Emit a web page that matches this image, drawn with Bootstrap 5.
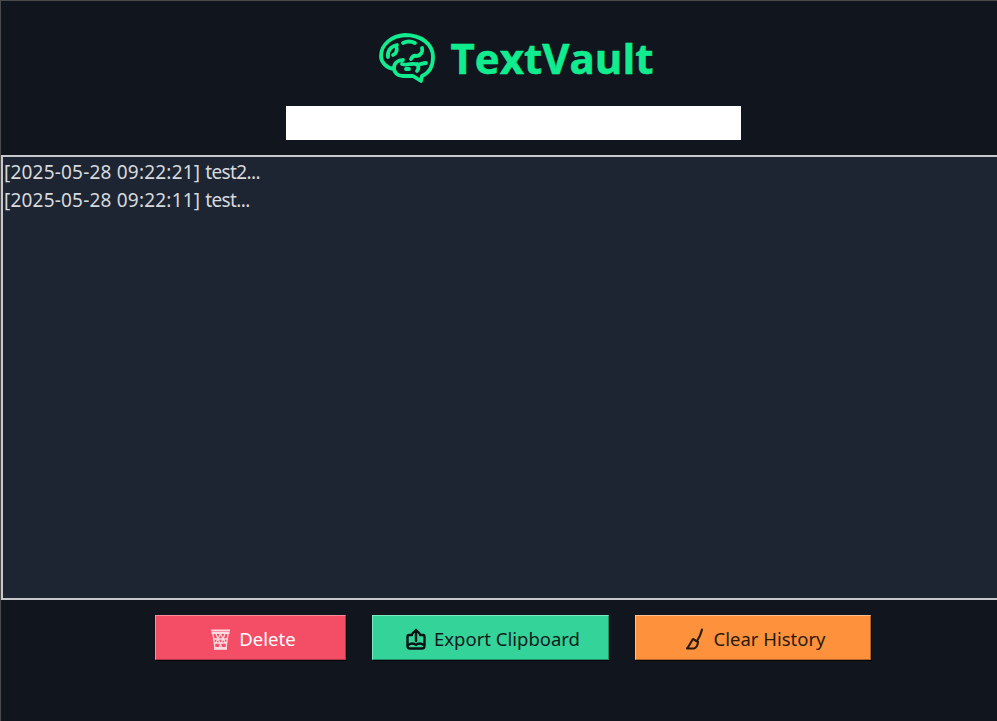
<!DOCTYPE html>
<html lang="en">
<head>
    <meta charset="UTF-8">
    <meta name="viewport" content="width=device-width, initial-scale=1.0">
    <title>TextVault</title>
    <link href="https://cdn.jsdelivr.net/npm/bootstrap@5.3.0/dist/css/bootstrap.min.css" rel="stylesheet">
    <style>
        html, body { height: 100%; }
        body {
            background-color: #10151e;
            font-family: "Noto Sans", "Open Sans", sans-serif;
            overflow: hidden;
        }
        .vault-window {
            height: 721px;
            border-top: 1px solid #4a4a4a;
            border-left: 1px solid #4a4a4a;
        }
        .vault-head { height: 154px; padding-top: 29px; padding-left: 28px; }
        .vault-brand { margin-left: 6px; }
        .vault-title {
            color: #10ec8e;
            font-family: "Open Sans", "Noto Sans", sans-serif;
            font-size: 42px;
            font-weight: 700;
            line-height: 56px;
            margin: 0;
            -webkit-text-stroke: 0.5px #10ec8e;
        }
        .vault-search {
            width: 455px;
            height: 34px;
            margin-top: 20px;
            border: 0;
            border-radius: 0;
            background: #fff;
        }
        .vault-list {
            height: 445px;
            background: #1e2532;
            border: 2px solid #c6c8cb;
            border-right-width: 0;
            border-radius: 0;
            padding: 1px 1px 0;
            color: #d6d9dd;
            font-size: 19px;
        }
        .vault-list .list-group-item {
            background: transparent;
            border: 0;
            color: inherit;
            padding: 0;
            line-height: 28px;
        }
        .log-time { letter-spacing: 0.2px; }
        .log-text { letter-spacing: -0.6px; }
        .vault-actions { gap: 26px; padding-top: 15px; padding-left: 28px; }
        .vault-btn {
            height: 45px;
            display: flex;
            align-items: center;
            justify-content: center;
            gap: 8px;
            font-size: 18.5px;
            border-radius: 0;
            border: 1px solid;
            padding: 3px 0 0 5px;
            box-shadow: 1px 1px 0 #05070a;
        }
        .btn-del { width: 191px; background: #f44d66; color: #fff; border-color: #fb8a9b #a8384a #a8384a #fb8a9b; }
        .btn-exp { width: 237px; background: #34d399; color: #0f1a1c; border-color: #7de9c2 #228f68 #228f68 #7de9c2; }
        .btn-clr { width: 236px; background: #fe923c; color: #2a1a0c; border-color: #ffc18d #b0662a #b0662a #ffc18d; }
    </style>
</head>
<body>
    <div class="vault-window d-flex flex-column">
        <div class="vault-head d-flex flex-column align-items-center">
            <div class="vault-brand d-flex align-items-center gap-3">
                <svg width="56" height="50" viewBox="0 0 56 50" fill="none" stroke="#10ec8e" stroke-width="3.8" stroke-linecap="round" stroke-linejoin="round">
                    <path d="M15 36 C7 35 2 29 2 23 C2 11 13 3 26 2 C42 2 54 11 54 24 C54 33 50 40 43 43 L42 48 L34 43 H24 C18 43 15 39 15 35 C15 30 19 27 24 27"/>
                    <path d="M9 24 C8 18 12 13 18 12 M17 13 C19 17 17 21 14 22"/>
                    <path d="M24 10 C28 8 32 8 36 10"/>
                    <path d="M43 15 C44 19 42 22 38 23 M38 23 C35 22 33 24 32 26"/>
                    <path d="M23 31 C29 33 32 30 36 31 C39 33 43 30 47 30 M38 31 C40 34 40 36 38 38 M27 36 H30"/>
                </svg>
                <h1 class="vault-title">TextVault</h1>
            </div>
            <input type="text" class="form-control vault-search" aria-label="Search">
        </div>

        <ul class="list-group vault-list">
            <li class="list-group-item"><span class="log-time">[2025-05-28 09:22:21]</span> <span class="log-text">test2...</span></li>
            <li class="list-group-item"><span class="log-time">[2025-05-28 09:22:11]</span> <span class="log-text">test...</span></li>
        </ul>

        <div class="d-flex justify-content-center vault-actions">
            <button class="btn vault-btn btn-del">
                <svg width="21" height="22" viewBox="0 0 21 22" fill="none" stroke="#ffdce2" stroke-width="1.3">
                    <path d="M1 2.5 H20 M1.5 5 H19.5" stroke-width="2.2"/>
                    <path d="M3 6 L5 20 H16 L18 6"/>
                    <path d="M6 6 L12 20 M10.5 6 L16 16 M15 6 L9 20 M10.5 6 L5 16 M3.5 11 H17.5 M4 15 H17"/>
                    <path d="M4 20.5 H17" stroke-width="2.6"/>
                </svg>
                <span>Delete</span>
            </button>
            <button class="btn vault-btn btn-exp">
                <svg width="20" height="22" viewBox="0 0 20 22" fill="none" stroke="#0b1214" stroke-width="2.4" stroke-linejoin="round" stroke-linecap="round">
                    <path d="M6 7 H3 C2 7 1.5 8 1.5 9 V18 C1.5 20 2 20.5 4 20.5 H16 C18 20.5 18.5 20 18.5 18 V9 C18.5 8 18 7 17 7 H14"/>
                    <path d="M2 17 C5 15 8 15 10 17 C12 15 15 15 18 17"/>
                    <path d="M10 13 V2 M6.5 5.5 L10 2 L13.5 5.5"/>
                </svg>
                <span>Export Clipboard</span>
            </button>
            <button class="btn vault-btn btn-clr">
                <svg width="20" height="22" viewBox="0 0 20 22" fill="none" stroke="#2a1a0c" stroke-width="2.1" stroke-linejoin="round" stroke-linecap="round">
                    <path d="M17 1.5 C16 6 14 10 12 13"/>
                    <path d="M8 11 L13 14 C13 17 11 20 9 20.5 H2 C4 18 6 14 8 11 Z"/>
                </svg>
                <span>Clear History</span>
            </button>
        </div>
    </div>
    <script src="https://cdn.jsdelivr.net/npm/bootstrap@5.3.0/dist/js/bootstrap.bundle.min.js"></script>
</body>
</html>
